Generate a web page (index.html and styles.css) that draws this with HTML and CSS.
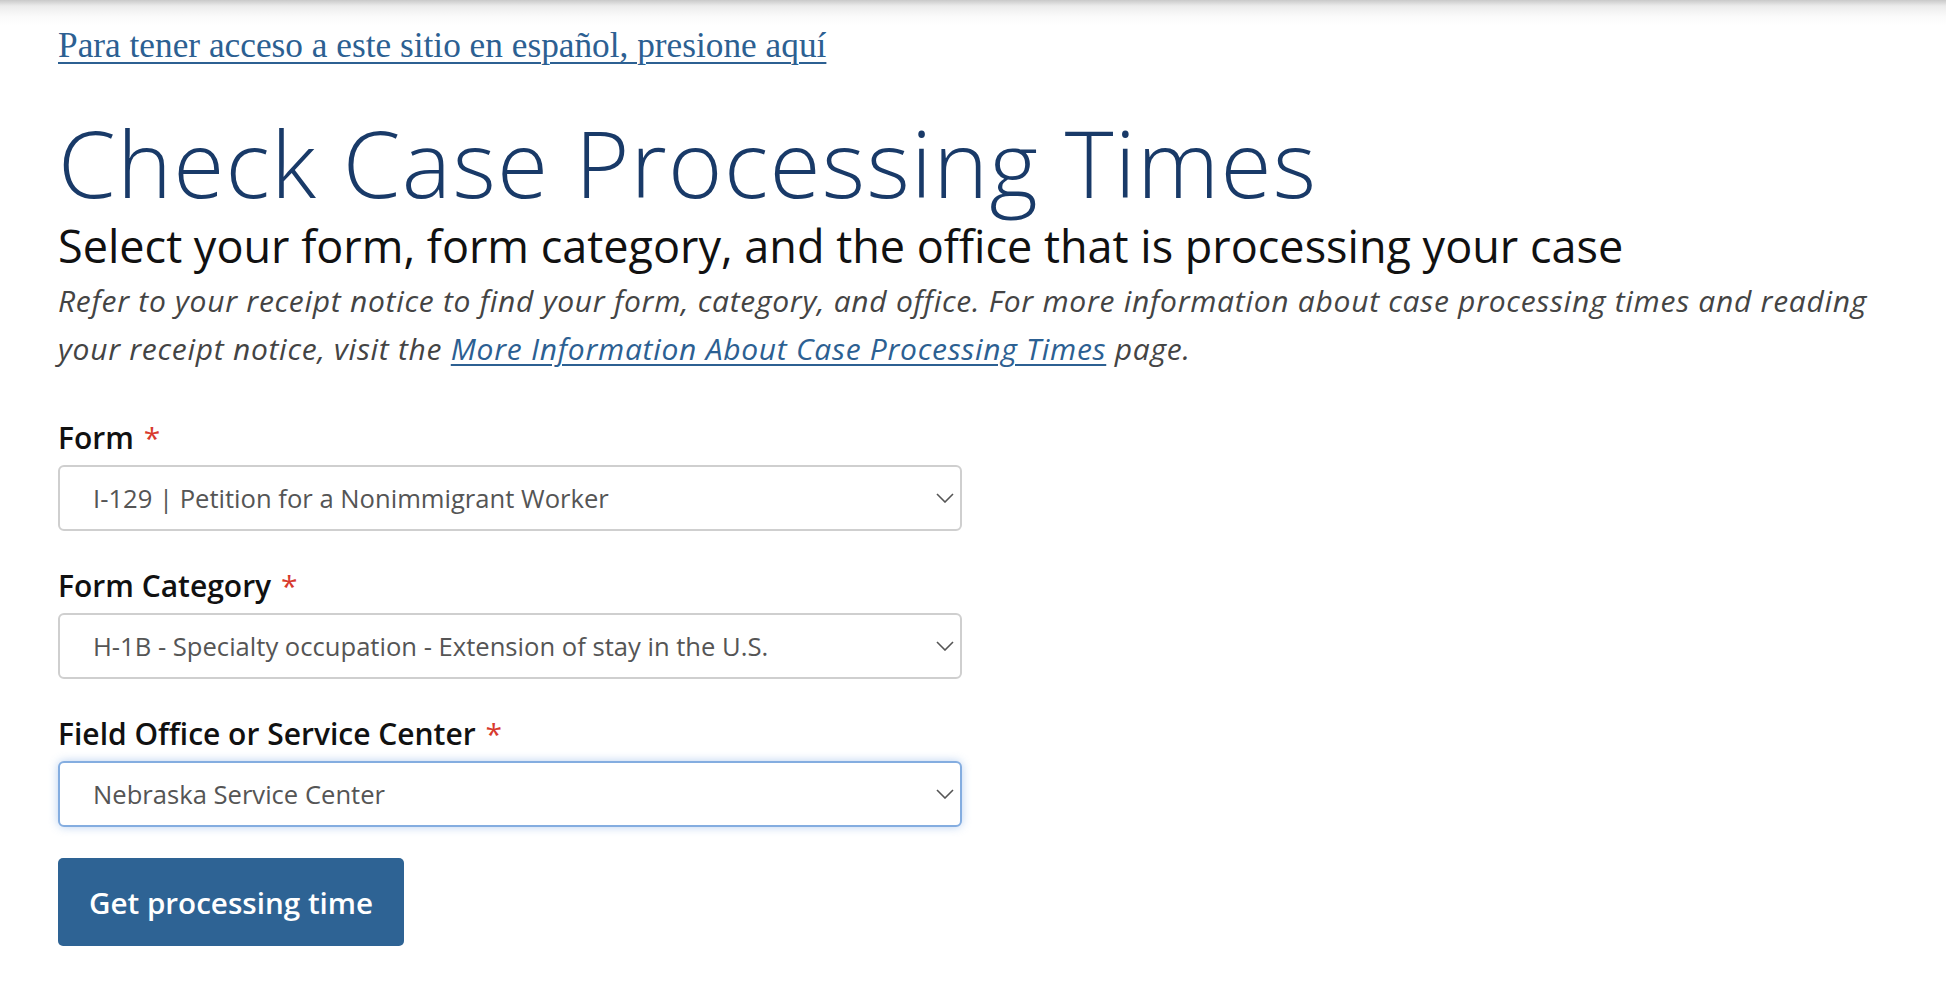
FILE: index.html
```html
<!DOCTYPE html>
<html lang="en">
<head>
    <meta charset="UTF-8">
    <title>Check Case Processing Times</title>
    <link rel="stylesheet" href="styles.css">
</head>
<body>
    <div class="top-shadow"></div>
    <main class="page">
        <a class="lang-link" href="#">Para tener acceso a este sitio en español, presione aquí</a>

        <h1 class="title">Check Case Processing Times</h1>
        <h2 class="subtitle">Select your form, form category, and the office that is processing your case</h2>
        <p class="intro">Refer to your receipt notice to find your form, category, and office. For more information about case processing times and reading your receipt notice, visit the <a href="#">More Information About Case Processing Times</a> page.</p>

        <form class="pt-form" action="#" onsubmit="return false;">
            <div class="field">
                <label for="selectForm">Form <span class="req">*</span></label>
                <div class="select-wrap">
                    <select id="selectForm">
                        <option>I-129 | Petition for a Nonimmigrant Worker</option>
                    </select>
                    <svg class="chev" width="18" height="10" viewBox="0 0 18 10"><path d="M1 1l8 8 8-8" fill="none" stroke="#555" stroke-width="1.6"/></svg>
                </div>
            </div>

            <div class="field">
                <label for="selectCat">Form Category <span class="req">*</span></label>
                <div class="select-wrap">
                    <select id="selectCat">
                        <option>H-1B - Specialty occupation - Extension of stay in the U.S.</option>
                    </select>
                    <svg class="chev" width="18" height="10" viewBox="0 0 18 10"><path d="M1 1l8 8 8-8" fill="none" stroke="#555" stroke-width="1.6"/></svg>
                </div>
            </div>

            <div class="field">
                <label for="selectOffice">Field Office or Service Center <span class="req">*</span></label>
                <div class="select-wrap">
                    <select id="selectOffice" class="focused">
                        <option>Nebraska Service Center</option>
                    </select>
                    <svg class="chev" width="18" height="10" viewBox="0 0 18 10"><path d="M1 1l8 8 8-8" fill="none" stroke="#555" stroke-width="1.6"/></svg>
                </div>
            </div>

            <div class="actions">
                <button type="submit" class="btn-primary">Get processing time</button>
            </div>
        </form>
    </main>
</body>
</html>
```

FILE: styles.css
```css
body {
    margin: 0;
    background: #fff;
    font-family: "Open Sans", Lato, sans-serif;
    color: #1b1b1b;
}

.top-shadow {
    height: 26px;
    background: linear-gradient(to bottom, #c9c9c9 0, #ececec 6px, #fafafa 16px, #fff 26px);
}

.page {
    padding: 0 58px;
    max-width: 1832px;
}

.lang-link {
    display: inline-block;
    font-family: "Liberation Serif", "Times New Roman", serif;
    font-size: 35.3px;
    line-height: 40px;
    color: #2c6092;
    text-decoration: underline;
    text-decoration-thickness: 2px;
    text-underline-offset: 5px;
}

.title {
    margin: 40px 0 0 0;
    font-size: 93px;
    font-weight: 300;
    line-height: 112px;
    letter-spacing: 1.3px;
    color: #193a68;
}

.subtitle {
    margin: 2px 0 0 0;
    font-size: 45px;
    font-weight: 400;
    line-height: 52px;
    color: #111;
}

.intro {
    margin: 5px 0 0 0;
    font-size: 30px;
    line-height: 48px;
    letter-spacing: 0.72px;
    font-style: italic;
    color: #444;
}

.intro a {
    color: #2c6092;
    text-decoration: underline;
    text-decoration-thickness: 2px;
    text-underline-offset: 4px;
}

.pt-form {
    display: flex;
    flex-direction: column;
    gap: 37px;
    margin-top: 47px;
}

.field {
    display: flex;
    flex-direction: column;
    gap: 10px;
}

.field label {
    font-size: 30px;
    font-weight: 600;
    line-height: 35px;
    color: #111;
}

.req {
    color: #d83a2e;
    font-weight: 400;
    margin-left: 2px;
}

.select-wrap {
    position: relative;
    width: 904px;
}

.select-wrap select {
    appearance: none;
    -webkit-appearance: none;
    display: block;
    width: 100%;
    height: 66px;
    margin: 0;
    padding: 0 60px 0 33px;
    border: 2px solid #cfcfcf;
    border-radius: 6px;
    background: #fff;
    font-family: "Open Sans", Lato, sans-serif;
    font-size: 25.6px;
    color: #555;
    outline: none;
}

.select-wrap select.focused {
    border-color: #84ade0;
    box-shadow: 0 0 10px rgba(102, 153, 221, 0.45);
}

.chev {
    position: absolute;
    right: 8px;
    top: 28px;
    pointer-events: none;
}

.actions {
    margin-top: -6px;
}

.btn-primary {
    height: 88px;
    padding: 0 31px;
    border: none;
    border-radius: 5px;
    background: #2e6394;
    color: #fff;
    font-family: "Open Sans", Lato, sans-serif;
    font-size: 29.6px;
    font-weight: 600;
    cursor: pointer;
}
```
